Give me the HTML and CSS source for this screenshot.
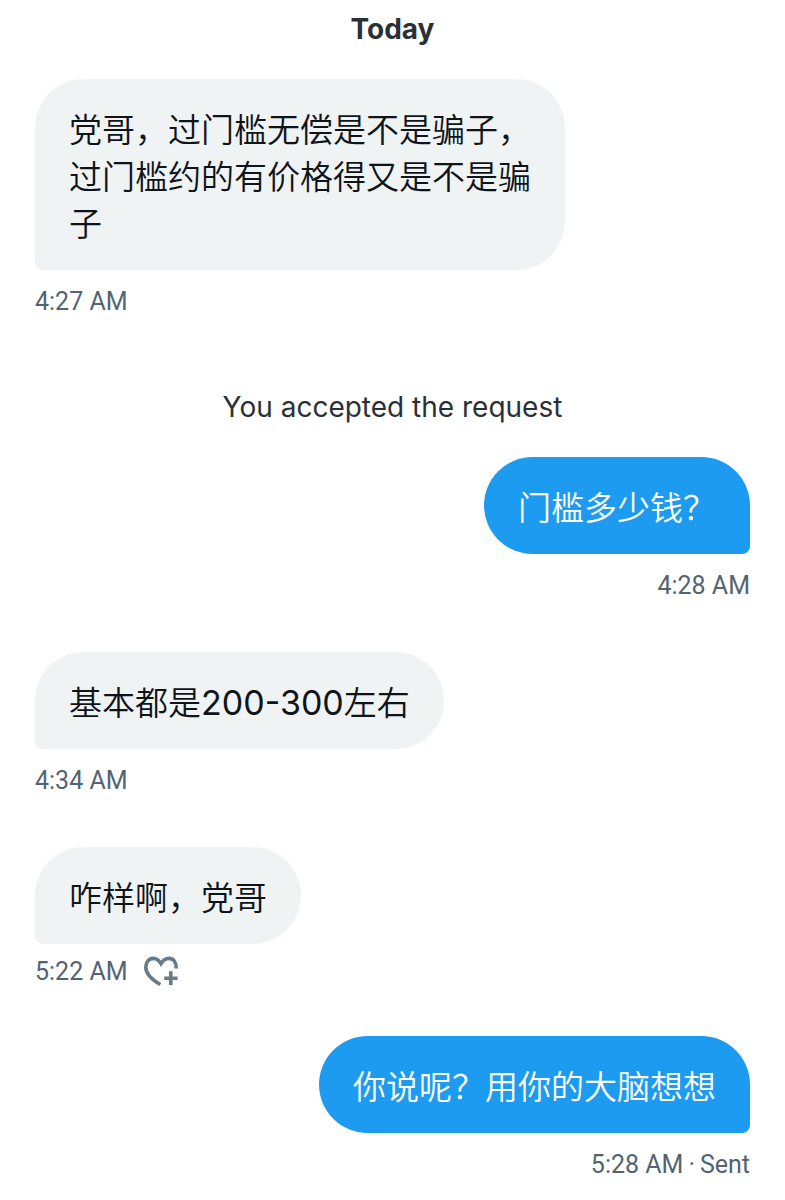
FILE: index.html
```html
<!DOCTYPE html>
<html lang="en">
<head>
<meta charset="utf-8">
<meta name="viewport" content="width=device-width, initial-scale=1">
<title>Messages</title>
<link rel="stylesheet" href="styles.css">
</head>
<body>
<main class="chat">
  <h1 class="day">Today</h1>
  <article class="message received">
    <p class="bubble" lang="zh-CN">党哥，过门槛无偿是不是骗子，过门槛约的有价格得又是不是骗子</p>
    <div class="meta"><time>4:27 AM</time></div>
  </article>
  <p class="notice">You accepted the request</p>
  <article class="message sent">
    <p class="bubble" lang="zh-CN">门槛多少钱？</p>
    <div class="meta"><time>4:28 AM</time></div>
  </article>
  <article class="message received">
    <p class="bubble" lang="zh-CN">基本都是<span class="amount">200-300</span>左右</p>
    <div class="meta"><time>4:34 AM</time></div>
  </article>
  <article class="message received reactable">
    <p class="bubble" lang="zh-CN">咋样啊，党哥</p>
    <div class="meta">
      <time>5:22 AM</time>
      <button class="react" type="button" aria-label="Add reaction">
        <svg class="icon" viewBox="0 0 36 32" aria-hidden="true">
          <path d="M17.3 28.5C8.5 23.5 2.8 17.2 2.8 11C2.8 6.2 6 2.4 10.2 2.4C13.4 2.4 16 4.4 18 7.6C20 4.4 22.6 2.4 25.8 2.4C30.4 2.4 33.4 6 33.2 12.5M27.8 15.2V29M21.2 22.2H34.6"/>
        </svg>
      </button>
    </div>
  </article>
  <article class="message sent">
    <p class="bubble" lang="zh-CN">你说呢？用你的大脑想想</p>
    <div class="meta"><time>5:28 AM</time><span>·</span><span>Sent</span></div>
  </article>
</main>
</body>
</html>
```
FILE: styles.css
```css
* { box-sizing: border-box; }

body {
  margin: 0;
  background: #fff;
  color: #0f1419;
  font-family: Inter, "Noto Sans CJK SC DemiLight", "Noto Sans CJK SC", sans-serif;
}

.chat {
  display: flex;
  flex-direction: column;
  padding: 9px 35px 0;
}

.day,
.notice {
  margin: 0 0 30px;
  color: #2b3036;
  font-size: 28px;
  line-height: 40px;
  text-align: center;
}

.day { font-weight: 700; }

.notice { margin-top: 19px; }

.message {
  display: flex;
  flex-direction: column;
  align-items: flex-start;
  gap: 14px;
  margin-bottom: 48px;
}

.sent { align-items: flex-end; }

.bubble {
  max-width: 530px;
  margin: 0;
  padding: 28px 34px 22px;
  border-radius: 49px 49px 49px 8px;
  background: #eff3f4;
  font-size: 33px;
  line-height: 47px;
}

.amount {
  font-size: 34px;
  line-height: 1;
}

.sent .bubble {
  border-radius: 49px 49px 8px 49px;
  background: #1d9bf0;
  color: #fff;
}

.meta {
  display: flex;
  align-items: center;
  gap: 5px;
  color: #536471;
  font-family: Roboto, sans-serif;
  font-size: 25px;
  line-height: 36px;
}

.reactable {
  gap: 10px;
  margin-bottom: 46px;
}

.reactable .meta { gap: 15px; }

.react {
  display: flex;
  padding: 0;
  border: 0;
  background: none;
  color: #687b8a;
}

.icon {
  width: 36px;
  height: 32px;
  fill: none;
  stroke: currentColor;
  stroke-width: 3.6;
}
```
